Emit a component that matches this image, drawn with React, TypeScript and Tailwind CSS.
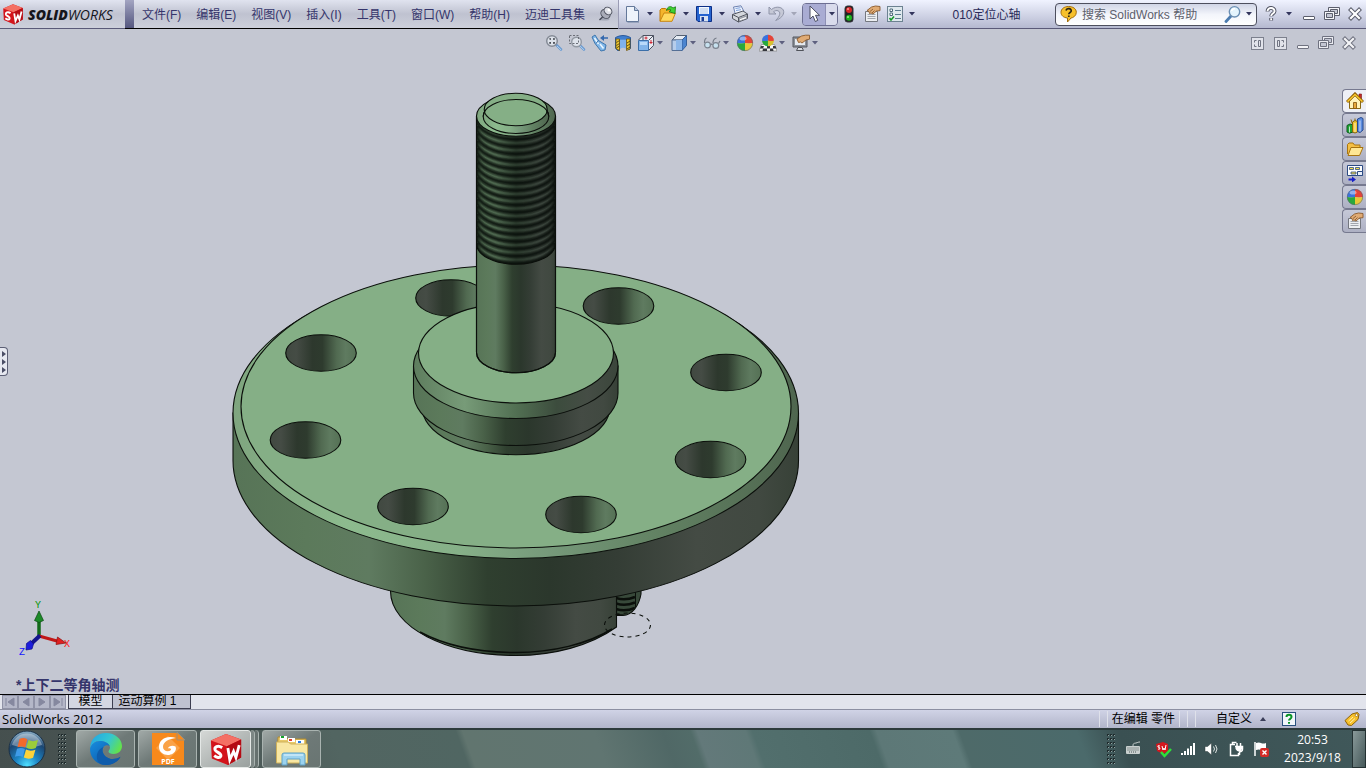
import React from "react";

type IconProps = { children: React.ReactNode; size?: number };

function Icon({ children, size = 18 }: IconProps) {
  return (
    <svg width={size} height={size} viewBox="0 0 18 18" fill="none" aria-hidden="true" className="shrink-0">
      {children}
    </svg>
  );
}

/* ---------- shared icons ---------- */

const NewDoc = () => (
  <Icon>
    <path d="M3.5 1.5h8l4 4v11h-12z" fill="#eef3fb" stroke="#64789a" />
    <path d="M11.5 1.5v4h4" fill="#b9c8df" stroke="#64789a" />
    <path d="M4.5 17.5h11.5" stroke="#7a8ba8" strokeWidth="0.6" />
  </Icon>
);

const OpenDoc = () => (
  <Icon>
    <path d="M1 16V5l1.500-1.500h4L8 5h5v3" fill="#f4b52c" stroke="#c07a08" />
    <path d="M1 16.300 5 8h11.500L13 16.300z" fill="#ffd95e" stroke="#c98510" />
    <path d="M7.500 5.500C8 1.500 12 .500 14 3l2.500-1.200-.500 6.700-6-1.800L12 5.200c-1.200-1.400-3-1.200-4.500.300z" fill="#3fd233" stroke="#14780f" strokeWidth="0.8" />
  </Icon>
);

const Save = () => (
  <Icon>
    <path d="M1.500 1.500h15v15H3l-1.500-1.500z" fill="#2563cf" stroke="#0d2f86" />
    <path d="M4 2h10v7H4z" fill="#f4f8ff" />
    <path d="M5 4h8M5 6h8M5 8h8" stroke="#9db5dc" strokeWidth="0.8" />
    <path d="M5 11h8v5.500H5z" fill="#d9e2f1" />
    <path d="M6.500 12h2.500v4H6.500z" fill="#173a93" />
  </Icon>
);

const Print = () => (
  <Icon>
    <path d="M4 8 2.500 2l7.500-1.200L13 6.500" fill="#f1f5ff" stroke="#6e83b1" />
    <path d="M4.500 3.500l5-.800M5 5.500l5-.800" stroke="#7ba0dc" />
    <path d="M1.500 9.500 12 6l4.500 3v4.500L7.500 17l-6-3.500z" fill="#d4d7dd" stroke="#50545e" />
    <path d="M1.500 9.500l6 3 9-3.500M7.500 12.500V17" stroke="#50545e" />
    <path d="M8 13l8-3v3.200L8 16.400z" fill="#9a9ea8" />
    <path d="M9 14.800l6-2.200" stroke="#ffffff" strokeWidth="1.200" />
  </Icon>
);

const UndoIcon = () => (
  <Icon>
    <path d="M2 2v7h7L6.500 6.800c3-2.500 7-1 6.200 2.500-.400 2.200-2 4-4 6.200 5-2 8.300-5.200 8-9C16.300 2 9 .500 4.500 4.500z" fill="#c5c8d6" stroke="#8f94a8" />
  </Icon>
);

const ArrowIcon = () => (
  <Icon>
    <path d="M5 1v13l3-3 2.300 5.500 2.500-1.200-2.300-5h4z" fill="#fff" stroke="#4b4e62" />
  </Icon>
);

const Traffic = () => (
  <Icon>
    <rect x="5" y="1" width="8" height="16" rx="2.500" fill="#202225" stroke="#303336" />
    <circle cx="9" cy="5" r="3" fill="#d8262a" />
    <circle cx="8" cy="4" r="1" fill="#ff9c94" />
    <circle cx="9" cy="12.800" r="3" fill="#1bb41e" />
    <circle cx="8" cy="12" r="1" fill="#9cf58e" />
  </Icon>
);

const HandSheet = () => (
  <Icon>
    <path d="M2.500 6.500h12v10h-12z" fill="#eceef2" stroke="#74777f" />
    <path d="M4.500 9.500h8M4.500 11.500h8M4.500 13.500h8" stroke="#a2a6ae" />
    <path d="M4 5.500 8.500 2l4-1 4.500.500v4.200l-3.500.300L10 9 8 8l-1.500.500L6 6.500z" fill="#e0ab74" stroke="#8a5a2c" strokeWidth="0.900" />
    <path d="M7 6.500 10 4M9 8l2.500-2.500" stroke="#74451d" strokeWidth="0.700" />
  </Icon>
);

const Options = () => (
  <Icon>
    <rect x="1.500" y="1.500" width="15" height="15" fill="#dfe9ee" stroke="#6c8291" />
    <path d="M4 4h2.500v2.500H4zM4 8h2.500v2.500H4z" stroke="#4f6a7c" fill="#fff" />
    <path d="M9 5.500h6M9 9.500h6M9 13.500h6" stroke="#5d7d91" />
    <path d="M3.500 13l1.500 2 3-3.500" stroke="#16982a" strokeWidth="1.600" />
  </Icon>
);

const Pin = () => (
  <Icon>
    <ellipse cx="7.500" cy="14" rx="5" ry="1.600" fill="#8e92a2" opacity="0.600" />
    <path d="M2.500 15 7 10.500" stroke="#444854" strokeWidth="1.300" />
    <ellipse cx="8.500" cy="9" rx="5" ry="4" fill="#a9acb8" stroke="#4b4f5b" transform="rotate(40 8.500 9)" />
    <ellipse cx="11" cy="6" rx="4.200" ry="3.400" fill="#dfe1e8" stroke="#4b4f5b" transform="rotate(40 11 6)" />
    <circle cx="12" cy="5" r="1.500" fill="#fff" />
  </Icon>
);

function Lens() {
  return (
    <>
      <path d="M11 10.500 16 15.500" stroke="#6d9bd0" strokeWidth="2.600" strokeLinecap="round" />
      <path d="M12 12 16.200 16" stroke="#bcdcf7" strokeWidth="0.800" />
    </>
  );
}

const ZoomFit = () => (
  <Icon>
    <Lens />
    <circle cx="7" cy="7" r="5.300" fill="#dde2ea" stroke="#858b96" strokeWidth="1.500" />
    <path d="M5 5.500V5h1M8 5h1.200v.800M9.200 8v1H8M6 9H5V8" stroke="#3f434b" strokeWidth="1.400" />
  </Icon>
);

const ZoomArea = () => (
  <Icon>
    <Lens />
    <circle cx="8.500" cy="8" r="4.800" fill="#dde2ea" stroke="#9298a2" strokeWidth="1.400" />
    <path d="M1.500 1.500h9v8h-9z" stroke="#6b6e77" strokeDasharray="2 1.500" />
  </Icon>
);

const PrevView = () => (
  <Icon>
    <path d="M1 3 4 1l3.500 5.500L15 11l-1 5-4 1-6-7.500z" fill="#7fb6e8" stroke="#3f77ae" />
    <path d="M3.500 4l4 6M9 10l3.500 4.500" stroke="#eaf6ff" strokeWidth="1.600" />
    <path d="M7.500 6.500 5 9.500" stroke="#2f66a0" />
    <path d="M11 4h6" stroke="#3369ae" strokeWidth="1.500" />
    <path d="M9 4l4-3v6z" fill="#3369ae" />
  </Icon>
);

const Section = () => (
  <Icon>
    <path d="M1.500 3.500Q9-.500 16.500 3.500V14l-1 1.500H13V6H5.500v10.500h-2L1.500 14z" fill="#3f7fd0" stroke="#28589b" />
    <path d="M6 5.500h6.500V15Q9 12.500 6 15z" fill="#7fb2ec" />
    <path d="M2 5h3.500v11.500L2 14.500zM12.500 5H16v10l-3.500 1.500z" fill="#f3cb32" stroke="#6d5410" strokeWidth="0.800" />
    <path d="M2.500 8.500l3-2M2.500 11.500l3-2M2.500 14l3-2M13 9l3-2M13 12l3-2M13 15l3-2" stroke="#4e3f10" strokeWidth="0.900" />
  </Icon>
);

const ViewCube = () => (
  <Icon>
    <path d="M1.500 6 6 1.500h10.500v10L12 16" fill="#e8ebf2" stroke="#4c5261" />
    <path d="M6 1.500V6M12 6l4.500-4.500" stroke="#4c5261" />
    <path d="M1.500 6.500h10v10h-10z" fill="#82b5ea" stroke="#3b6fa9" />
    <path d="M3 8h7v3H3z" fill="#b9dafa" />
    <path d="M9 2.500v3M7.500 4h3M14 6v4M12.500 8.500h3" stroke="#d12835" />
  </Icon>
);

const DisplayCube = () => (
  <Icon>
    <path d="M2 6 6.500 1.500h10L12 6z" fill="#e6ecf4" stroke="#556070" />
    <path d="M2 6h10v10.500H2z" fill="#b6cdeb" stroke="#556f95" />
    <path d="M12 6l4.500-4.500v10L12 16.500z" fill="#4c85cf" stroke="#34609d" />
    <path d="M6 6h6v10H6z" fill="#8db7e9" />
  </Icon>
);

const Glasses = () => (
  <Icon>
    <path d="M1.500 9c0-3 .500-4.500 2-5M10 9c0-3 1.500-4.500 3.500-5M7.500 11c.800-1 1.600-1 2.400-.400M15.500 9.500 17 7" stroke="#737a86" strokeWidth="1.200" />
    <circle cx="4.500" cy="11" r="2.900" fill="#c6e1ef" stroke="#7c838f" strokeWidth="1.200" />
    <circle cx="12.800" cy="11.500" r="2.900" fill="#c6e1ef" stroke="#7c838f" strokeWidth="1.200" />
  </Icon>
);

const Ball = () => (
  <Icon>
    <path d="M9 1A8 8 0 0 0 1 9q4 .800 8 0z" fill="#3b72de" />
    <path d="M9 1a8 8 0 0 1 8 8q-4 .800-8 0z" fill="#e44439" />
    <path d="M1 9a8 8 0 0 0 8 8V9q-4 .800-8 0z" fill="#2aa93c" />
    <path d="M17 9a8 8 0 0 1-8 8V9q4 .800 8 0z" fill="#e8c93a" />
    <ellipse cx="7" cy="4.500" rx="3.500" ry="2" fill="#fff" opacity="0.450" />
    <circle cx="9" cy="9" r="7.700" stroke="#5a6672" strokeWidth="0.600" />
  </Icon>
);

const Scene = () => (
  <Icon>
    <path d="M2.500 10.500h13L18 17H0z" fill="#f5f5f5" stroke="#777" strokeWidth="0.600" />
    <path d="M2 12h3l-1 2.500H1zM8 12h3v2.500H8zM14 12h2.500l1 2.500H14zM4 14.500h4V17H3.500zM11 14.500h3l.500 2.500H11z" fill="#34363c" />
    <path d="M9 .800a5.800 5.800 0 0 0-6 6q3 .600 6 0z" fill="#3b72de" />
    <path d="M9 .800a5.800 5.800 0 0 1 6 6q-3 .600-6 0z" fill="#e44439" />
    <path d="M3 6.800a6 6 0 0 0 6 5.500V6.800q-3 .600-6 0z" fill="#2aa93c" />
    <path d="M15 6.800a6 6 0 0 1-6 5.500V6.800q3 .600 6 0z" fill="#d9c12f" />
  </Icon>
);

const Monitor = () => (
  <Icon>
    <path d="M1 3h14v10H1z" fill="#8b9098" stroke="#54575e" />
    <path d="M3 5h10v6H3z" fill="#e5e9ef" />
    <path d="M6 13.500h4l1.500 3h-7z" fill="#d8dbe1" stroke="#50535a" />
    <path d="M5 5 9.500 2l4-.800H17.500v4L14 6l-4 3-1.500-1-2 .500z" fill="#e0ab74" stroke="#8a5a2c" strokeWidth="0.900" />
  </Icon>
);

const Minimize = () => (
  <Icon>
    <rect x="3.500" y="11.500" width="11" height="3" rx="0.500" fill="#fff" stroke="#5b5e6c" />
  </Icon>
);

const Restore = () => (
  <Icon>
    <path d="M5.500 2.500h11v8h-11z" fill="#f4f5f9" stroke="#5b5e6c" />
    <path d="M7.500 4.500h7v4h-7z" fill="#c4c7d4" stroke="#5b5e6c" />
    <path d="M1.500 6.500h10v8h-10z" fill="#f4f5f9" stroke="#5b5e6c" />
    <path d="M3.500 8.500h6v4h-6z" fill="#c4c7d4" stroke="#5b5e6c" />
  </Icon>
);

const Close = () => (
  <Icon>
    <path d="M3.500 3.500l11 11M14.500 3.500l-11 11" stroke="#5b5e6c" strokeWidth="4.200" />
    <path d="M4.200 4.200l9.600 9.600M13.800 4.200l-9.600 9.600" stroke="#fff" strokeWidth="2.200" />
  </Icon>
);

const Dock = ({ flip = false }: { flip?: boolean }) => (
  <Icon>
    <rect x="3.500" y="3.500" width="12" height="12" fill="#e9ebf1" stroke="#6b6f7d" />
    <path d={flip ? "M6.500 6.500h2v6h-2z" : "M10.500 6.500h2v6h-2z"} stroke="#5b5f6d" />
    <path d={flip ? "M10.500 6.500h2v2M10.500 12.500h2v-2" : "M8.500 6.500h-2v2M8.500 12.500h-2v-2"} stroke="#5b5f6d" />
  </Icon>
);

const Help = () => (
  <Icon>
    <path d="M5.500 6.500c0-5 7.500-4.500 7 0-.300 2.200-3.300 2-3.300 4.800M9.200 13v2.500" stroke="#4a4d5c" strokeWidth="3.800" />
    <path d="M5.500 6.200c0-4.500 7.500-4 7 .300-.300 2.200-3.300 2-3.300 4.600M9.200 13.300v1.900" stroke="#fff" strokeWidth="2" />
  </Icon>
);

const HelpBubble = () => (
  <Icon>
    <path d="M8.500 1.500c4.500 0 7.800 2.200 7.800 5.800S13 12.800 11 13l-3.500 4v-4C3.500 12.600 1 10.500 1 7.300s3-5.800 7.500-5.800z" fill="#f6c02c" stroke="#a46d0b" />
    <path d="M6 5.500c.500-2.800 5.800-2.300 5.200.600-.400 1.500-2.300 1.500-2.400 3.200M8.800 10.500V12" stroke="#2a2417" strokeWidth="1.700" />
  </Icon>
);

const Magnifier = () => (
  <Icon>
    <path d="M7 11 2 16.500" stroke="#4c7cb0" strokeWidth="2.800" strokeLinecap="round" />
    <circle cx="10.500" cy="6.800" r="5.200" fill="#e4f4fd" stroke="#6b8fb3" strokeWidth="1.400" />
    <path d="M7.500 6c.500-1.800 2-2.500 3.500-2.300" stroke="#fff" strokeWidth="1.500" />
  </Icon>
);

/* ---------- task pane icons ---------- */

const Home = () => (
  <Icon>
    <path d="M13 2h2.500v6H13z" fill="#c52b2b" stroke="#7b1414" strokeWidth="0.600" />
    <path d="M3.500 9v7.500h11V9L9 3.500z" fill="#fff3b8" stroke="#8a6a14" />
    <path d="M1 10 9 2l8 8" stroke="#8a5c07" strokeWidth="3" />
    <path d="M1.500 9.600 9 2.500l7.500 7.100" stroke="#f9c82d" strokeWidth="1.500" />
    <path d="M7.500 10.500h3v6h-3z" fill="#e8a93b" stroke="#7e5108" strokeWidth="0.800" />
  </Icon>
);

const Books = () => (
  <Icon>
    <path d="M1 9.500 4 8l3 1v7l-3.500 1.200L1 16z" fill="#1fa535" stroke="#0c5c1a" />
    <path d="M6.500 6 9 4.500l2.500 1V16L9 17l-2.500-1z" fill="#f0c432" stroke="#86660d" />
    <path d="M11.500 3 15 1.500l2 1V14l-3 2.500-2.500-1z" fill="#5d8de0" stroke="#25488f" />
    <path d="M3.500 10.500v6M9 7v9M14 4.500v11" stroke="#fff" opacity="0.700" />
    <path d="M5 3.500l1.500 4.500M9 2.500v2" stroke="#86660d" />
  </Icon>
);

const Folder = () => (
  <Icon>
    <path d="M1.500 14V4.500L3 3h4l1.500 2h5.500v3" fill="#f4bf45" stroke="#a87410" />
    <path d="M2 15.500 5 7.500h12L13.500 15.500z" fill="#ffe794" stroke="#a87410" />
  </Icon>
);

const Palette = () => (
  <Icon>
    <path d="M1.500 1.500h15v10h-15z" fill="#fff" stroke="#2b4a83" />
    <path d="M3.500 3.500h4v2h-4zM9.500 3.500h4v2h-4zM5 8h5v2H5z" fill="#f6dd4a" stroke="#2b4a83" strokeWidth="0.800" />
    <path d="M11.500 7.500h5v4h-5z" fill="#e8eefa" stroke="#2b4a83" />
    <path d="M2.500 15.500H8" stroke="#1a22c8" strokeWidth="2" />
    <path d="M6 12.500l4 3-4 3z" fill="#1a22c8" />
  </Icon>
);

function Cube({ size }: { size: number }) {
  return (
    <svg width={size} height={size} viewBox="0 0 36 36" aria-hidden="true" className="shrink-0">
      <path d="M2 9 18 2l16 6v19L20 35 3 28z" fill="#d3141b" />
      <path d="M2 9 18 2l16 6-15 7z" fill="#f47064" />
      <path d="M19 15 34 8v19L20 35z" fill="#b40b13" />
      <path d="M14 16.500c-5-3-8.500-.500-7.500 2.500 1 2.500 7 3.500 6 6.500-1 2.500-4.500 1.500-7-.500" fill="none" stroke="#fff" strokeWidth="3.200" />
      <path d="M20 17l2 12.500 4-9 2.500 6.500 3.500-13" fill="none" stroke="#fff" strokeWidth="3" />
    </svg>
  );
}

/* ---------- small controls ---------- */

function Caret({ faded = false }: { faded?: boolean }) {
  return (
    <svg width="6" height="4" viewBox="0 0 6 4" aria-hidden="true">
      <path d="M0 0h6L3 3.500z" fill={faded ? "#a3a6b8" : "#33355c"} />
    </svg>
  );
}

function ToolButton({ label, icon, faded }: { label: string; icon: React.ReactNode; faded?: boolean }) {
  return (
    <div className="flex">
      <button aria-label={label} className="flex w-5 items-center justify-center">{icon}</button>
      <button aria-label={`${label} ▾`} className="flex w-4 items-center justify-center">
        <Caret faded={faded} />
      </button>
    </div>
  );
}

function HudButton({ label, icon, menu }: { label: string; icon: React.ReactNode; menu?: boolean }) {
  return (
    <div className="flex">
      <button aria-label={label} className="flex w-[23px] items-center justify-center">{icon}</button>
      {menu && (
        <button aria-label={`${label} ▾`} className="flex w-[10px] items-center opacity-70">
          <Caret />
        </button>
      )}
    </div>
  );
}

function Grip() {
  return (
    <svg width="9" height="31" viewBox="0 0 9 31" aria-hidden="true">
      {[0, 4, 8, 12, 16, 20, 24, 28].map((y) =>
        [0, 3, 6].map((x) => (
          <g key={`${x}-${y}`}>
            <rect x={x} y={y} width="2" height="2" fill="#1f2b2d" />
            <rect x={x + 1} y={y + 1} width="1" height="1" fill="#8fa09f" />
          </g>
        )),
      )}
    </svg>
  );
}

/* ---------- header ---------- */

const menus = ["文件(F)", "编辑(E)", "视图(V)", "插入(I)", "工具(T)", "窗口(W)", "帮助(H)", "迈迪工具集"];

function Header() {
  return (
    <header className="flex h-[29px] shrink-0 items-stretch">
      <div className="flex w-[125px] shrink-0 items-center gap-1 border-b border-[#5a5a78] bg-linear-to-b from-[#e1e4f0] via-[#c0c3d1] to-[#cdd0db] pl-[2px]">
        <Cube size={22} />
        <span className="pt-[2px] font-['Open_Sans','Liberation_Sans',sans-serif] text-[14px] leading-4 text-[#15151c] italic">
          <b className="font-extrabold">SOLID</b>WORKS
        </span>
      </div>
      <div className="w-[9px] shrink-0 border-b border-black bg-linear-to-b from-[#a3a5c2] to-[#55577f]" />
      <nav className="flex shrink-0 items-center border-b border-black bg-linear-to-b from-[#e0e3ef] via-[#bfc2d0] to-[#cdd0db] pr-[3px] pl-2 text-[12px] text-[#35356b]">
        <div className="flex gap-[15px] pt-[2px]">
          {menus.map((m) => (
            <button key={m} className="whitespace-nowrap">{m}</button>
          ))}
        </div>
        <button aria-label="固定菜单" className="ml-3"><Pin /></button>
      </nav>
      <div className="flex min-w-0 flex-1 items-center border-b border-b-[#5a5a78] border-l border-l-[#9a9cb4] bg-linear-to-b from-[#f0f3ff] to-[#b5b9d0] pl-[3px]">
        <ToolButton label="新建" icon={<NewDoc />} />
        <ToolButton label="打开" icon={<OpenDoc />} />
        <ToolButton label="保存" icon={<Save />} />
        <ToolButton label="打印" icon={<Print />} />
        <ToolButton label="撤消" icon={<UndoIcon />} faded />
        <div className="flex h-[23px] w-9 shrink-0 overflow-hidden rounded border border-[#6d6f92]">
          <button aria-label="选择" className="flex flex-1 items-center justify-center bg-[#a9acd3]"><ArrowIcon /></button>
          <button aria-label="选择 ▾" className="flex w-3 items-center justify-center border-l border-[#8e90b5] bg-[#d9dbec]"><Caret /></button>
        </div>
        <button aria-label="重建模型" className="flex w-[22px] justify-center"><Traffic /></button>
        <button aria-label="文件属性" className="flex w-6 justify-center"><HandSheet /></button>
        <button aria-label="选项" className="flex w-[22px] justify-center"><Options /></button>
        <button aria-label="选项 ▾" className="flex w-3 justify-center"><Caret /></button>
        <h1 className="min-w-0 flex-1 truncate pt-[2px] text-center text-[12px] text-[#2a2a58]">010定位心轴</h1>
        <div className="flex h-[23px] w-[202px] shrink-0 items-center rounded border border-[#4d4f5e] bg-linear-to-b from-[#d0d5e6] via-[#f3f5fb] to-white px-1">
          <HelpBubble />
          <input aria-label="搜索帮助" placeholder="搜索 SolidWorks 帮助" className="ml-1 min-w-0 flex-1 bg-transparent pt-[2px] text-[12px] outline-none placeholder:text-[#5d606c]" />
          <button aria-label="搜索"><Magnifier /></button>
          <button aria-label="搜索 ▾" className="ml-1"><Caret /></button>
        </div>
        <button aria-label="帮助" className="ml-[2px] flex w-6 justify-center"><Help /></button>
        <button aria-label="帮助 ▾" className="flex w-3 justify-center"><Caret /></button>
        <div className="ml-[2px] flex">
          <button aria-label="最小化" className="flex w-[23px] justify-center"><Minimize /></button>
          <button aria-label="还原" className="flex w-[23px] justify-center"><Restore /></button>
          <button aria-label="关闭" className="flex w-[23px] justify-center"><Close /></button>
        </div>
      </div>
    </header>
  );
}

/* ---------- 3D model ---------- */

const holes = [
  [451, 298], [618.5, 306], [726, 372.5], [710.5, 459.5], [581, 514.5], [413, 506.5], [305.5, 440], [321, 353],
];

const threadRows = Array.from({ length: 18 }, (_, i) => 119 + i * 7.3);

function Model() {
  return (
    <svg className="absolute inset-0 h-full w-full" role="img" aria-label="010定位心轴">
      <defs>
        <linearGradient id="wall">
          <stop offset="0" stopColor="#577457" />
          <stop offset="0.130" stopColor="#5c7a5b" />
          <stop offset="0.240" stopColor="#5f7b60" />
          <stop offset="0.340" stopColor="#4a6249" />
          <stop offset="0.450" stopColor="#2f3f2f" />
          <stop offset="0.560" stopColor="#2b372c" />
          <stop offset="0.680" stopColor="#343d35" />
          <stop offset="0.820" stopColor="#444b44" />
          <stop offset="0.930" stopColor="#414941" />
          <stop offset="1" stopColor="#374137" />
        </linearGradient>
        <linearGradient id="bore">
          <stop offset="0" stopColor="#414941" />
          <stop offset="0.150" stopColor="#454c45" />
          <stop offset="0.380" stopColor="#2d382d" />
          <stop offset="0.520" stopColor="#2e3b2e" />
          <stop offset="0.720" stopColor="#516a51" />
          <stop offset="0.850" stopColor="#5f7b60" />
          <stop offset="1" stopColor="#557155" />
        </linearGradient>
        <linearGradient id="rim">
          <stop offset="0" stopColor="#7fa57f" />
          <stop offset="0.200" stopColor="#8dbb8e" />
          <stop offset="0.400" stopColor="#86b088" />
          <stop offset="0.560" stopColor="#76997a" />
          <stop offset="0.750" stopColor="#628263" />
          <stop offset="1" stopColor="#4f664f" />
        </linearGradient>
        <linearGradient id="collar">
          <stop offset="0" stopColor="#5e7d5e" />
          <stop offset="0.250" stopColor="#779b78" />
          <stop offset="0.500" stopColor="#527053" />
          <stop offset="0.700" stopColor="#3c4c3d" />
          <stop offset="0.850" stopColor="#454d45" />
          <stop offset="1" stopColor="#3b463b" />
        </linearGradient>
        <linearGradient id="groove">
          <stop offset="0" stopColor="#4f6b50" />
          <stop offset="0.250" stopColor="#4c654d" />
          <stop offset="0.500" stopColor="#29382b" />
          <stop offset="0.800" stopColor="#39433b" />
          <stop offset="1" stopColor="#353f37" />
        </linearGradient>
        <clipPath id="threadClip">
          <path d="M476.500 116a39.500 20.300 0 0 0 79 0V244a39.500 20.300 0 0 1-79 0z" />
        </clipPath>
        <clipPath id="screwClip">
          <path d="M616.500 590H641C641 606 632 615 616.500 616z" />
        </clipPath>
      </defs>

      <g transform="translate(0 -29)" stroke="#0b0f0b" strokeWidth="1.100">
        {/* lower boss */}
        <path d="M616.500 580H641V594C639 606 632 615 623 615.500H616.500z" fill="#38493a" />
        <g clipPath="url(#screwClip)" strokeWidth="2.500">
          {[598, 603.5, 609, 614.5].map((y) => (
            <path key={y} d={`M616 ${y}q9 3 19-1`} fill="none" />
          ))}
          <path d="M635.500 590v21" strokeWidth="1" />
        </g>
        <path d="M390.500 591C390.500 627 446 655.500 516 655.500C553 655.500 590 646 616.500 627V570H390.500z" fill="url(#wall)" />
        <path d="M420 632C446 646 479 652.500 516 652.500C552 652.500 588 644 612 629" fill="none" strokeWidth="1.500" />
        <ellipse cx="627.500" cy="625" rx="23" ry="12" fill="none" strokeDasharray="4 4" />

        {/* flange */}
        <path d="M233 413V460.500A282.750 145.500 0 0 0 798.500 460.500V413z" fill="url(#wall)" />
        <ellipse cx="515.750" cy="413" rx="282.750" ry="145.500" fill="url(#rim)" />
        <ellipse cx="516" cy="406.500" rx="275" ry="141.500" fill="#85af86" />
        {holes.map(([x, y]) => (
          <ellipse key={x} cx={x} cy={y} rx="35.300" ry="18.200" fill="url(#bore)" />
        ))}

        {/* hub */}
        <ellipse cx="516" cy="407" rx="94" ry="47.700" fill="url(#wall)" />
        <path d="M413.500 366V393A102.250 52.500 0 0 0 618 393V366z" fill="url(#wall)" />
        <ellipse cx="515.750" cy="366" rx="102.250" ry="52.500" fill="url(#collar)" />
        <ellipse cx="516" cy="353" rx="97.500" ry="50" fill="#85af86" />

        {/* spindle */}
        <path d="M476.500 116V352.500A39.500 20.300 0 0 0 555.500 352.500V116z" fill="url(#wall)" />
        <g clipPath="url(#threadClip)" fill="none">
          <rect x="476" y="110" width="80" height="160" fill="url(#groove)" stroke="none" />
          {threadRows.map((y) => (
            <g key={y} stroke="#060b07">
              <path d={`M476.500 ${y}a39.500 20.300 0 0 0 79 0`} strokeWidth="5.200" opacity="0.300" />
              <path d={`M476.500 ${y}a39.500 20.300 0 0 0 79 0`} strokeWidth="3.400" opacity="0.400" />
              <path d={`M476.500 ${y}a39.500 20.300 0 0 0 79 0`} strokeWidth="1.500" opacity="0.500" />
            </g>
          ))}
        </g>
        <path d="M476.500 116V352.500A39.500 20.300 0 0 0 555.500 352.500V116" fill="none" />
        <path d="M476.500 244a39.500 20.300 0 0 0 79 0" fill="none" />
        <ellipse cx="516" cy="116" rx="39.500" ry="20.300" fill="url(#rim)" />
        <ellipse cx="516" cy="116.500" rx="32.800" ry="17" fill="url(#rim)" />
        <ellipse cx="515.700" cy="109.500" rx="31.500" ry="16.200" fill="#85af86" />
        <path d="M483.200 116.500a32.800 17 0 0 1 65.600 0" fill="none" />
      </g>
    </svg>
  );
}

function Triad() {
  return (
    <svg width="60" height="60" viewBox="14 598 60 60" className="absolute bottom-9 left-[14px]" role="img" aria-label="坐标轴">
      <path d="M39 636V620" stroke="#126a1a" strokeWidth="3.500" />
      <path d="M34.500 620.500 39 611l4.500 9.500-4.500 2z" fill="#1c8a28" stroke="#0c4912" strokeWidth="0.700" />
      <path d="M39 636 57 641" stroke="#c11717" strokeWidth="3.200" />
      <path d="M57.500 637 66 643l-10 1.500z" fill="#e02020" stroke="#8a0e0e" strokeWidth="0.700" />
      <path d="M40 635.500 32 643" stroke="#14148e" strokeWidth="4" />
      <path d="M26.500 643.500l4-3 3 3.500-1.500 5-6 1z" fill="#1d1ddb" stroke="#0d0d86" strokeWidth="0.700" />
      <g fontFamily="Liberation Mono, monospace" fontSize="10">
        <text x="35" y="608" fill="#079307">Y</text>
        <text x="64" y="647" fill="#ff1313">X</text>
        <text x="19" y="655" fill="#1414ff">Z</text>
      </g>
    </svg>
  );
}

const paneTabs = [
  ["SolidWorks 资源", <Home />],
  ["设计库", <Books />],
  ["文件探索器", <Folder />],
  ["视图调色板", <Palette />],
  ["外观", <Ball />],
  ["自定义属性", <HandSheet />],
] as [string, React.ReactNode][];

function Viewport() {
  return (
    <main className="relative flex min-h-0 flex-1 flex-col overflow-hidden bg-[#c4c7d2]">
      <Model />
      <div className="relative grid grid-cols-[1fr_auto_1fr] items-center pt-[5px]">
        <span />
        <div className="flex pr-[2px]">
          <HudButton label="整屏显示全图" icon={<ZoomFit />} />
          <HudButton label="局部放大" icon={<ZoomArea />} />
          <HudButton label="上一视图" icon={<PrevView />} />
          <HudButton label="剖面视图" icon={<Section />} />
          <HudButton label="视图定向" icon={<ViewCube />} menu />
          <HudButton label="显示样式" icon={<DisplayCube />} menu />
          <HudButton label="隐藏/显示项目" icon={<Glasses />} menu />
          <HudButton label="编辑外观" icon={<Ball />} />
          <HudButton label="应用布景" icon={<Scene />} menu />
          <HudButton label="视图设定" icon={<Monitor />} menu />
        </div>
        <div className="flex justify-end pr-[6px] opacity-80">
          <HudButton label="左侧面板" icon={<Dock />} />
          <HudButton label="右侧面板" icon={<Dock flip />} />
          <HudButton label="最小化文档" icon={<Minimize />} />
          <HudButton label="还原文档" icon={<Restore />} />
          <HudButton label="关闭文档" icon={<Close />} />
        </div>
      </div>
      <aside className="absolute top-[60px] right-0 flex flex-col">
        {paneTabs.map(([label, icon], i) => (
          <button
            key={label}
            aria-label={label}
            className={
              i === 0
                ? "flex h-6 w-6 items-center justify-center rounded-l-sm border border-r-0 border-[#76798f] bg-[#eef0f6]"
                : "flex h-6 w-6 items-center justify-center rounded-l-sm border border-r-0 border-[#76798f] bg-linear-to-b from-[#c6c9d8] to-[#adb0c3]"
            }
          >
            {icon}
          </button>
        ))}
      </aside>
      <button aria-label="展开设计树" className="absolute top-[318px] left-0 flex h-[29px] w-2 items-center justify-center rounded-r-sm border border-l-0 border-[#5c5f75] bg-[#e6e8f0]">
        <svg width="4" height="22" viewBox="0 0 4 22" aria-hidden="true">
          <path d="M0 0l4 3-4 3zM0 8l4 3-4 3zM0 16l4 3-4 3z" fill="#4b4e66" />
        </svg>
      </button>
      <Triad />
      <p className="absolute bottom-[1px] left-4 text-[14px] leading-4 font-bold text-[#35356b]">*上下二等角轴测</p>
    </main>
  );
}

/* ---------- bottom bars ---------- */

const navPaths = [
  "M3 3v8M11 3 5 7l6 4z",
  "M10 3 4 7l6 4z",
  "M4 3l6 4-6 4z",
  "M3 3l6 4-6 4zM11 3v8",
];

function SheetTabs() {
  return (
    <div className="flex h-4 shrink-0 items-stretch border-t border-b border-t-black border-b-[#8d90a2] bg-[#e2e4ec] pl-[2px] text-[12px] leading-[13px] text-black">
      {navPaths.map((d) => (
        <button key={d} aria-label="标签导航" className="flex w-4 items-center justify-center border border-[#8f92a6] bg-[#b4b7c8]">
          <svg width="14" height="12" viewBox="0 1 14 12" aria-hidden="true">
            <path d={d} fill="#85889f" stroke="#85889f" />
          </svg>
        </button>
      ))}
      <button className="ml-[2px] w-[45px] border-r border-b border-l border-[#3c3e50] bg-[#d3d6e2]">模型</button>
      <button className="w-[78px] border-r border-b border-[#3c3e50] bg-[#bfc2d0] pr-2">运动算例 1</button>
    </div>
  );
}

function StatusBar() {
  return (
    <div className="flex h-[18px] shrink-0 items-center bg-linear-to-b from-[#d0d3e6] to-[#b2b5ca] text-[12px] leading-4 text-black">
      <span className="flex-1 pl-[2px] font-['Open_Sans','Noto_Sans_CJK_SC',sans-serif] text-[13px]">SolidWorks 2012</span>
      <span className="h-4 w-[9px] border-x border-[#dfe1ea]" />
      <span className="px-1">在编辑 零件</span>
      <span className="h-4 w-[9px] border-x border-[#dfe1ea]" />
      <span className="h-4 w-2 border-r border-[#dfe1ea]" />
      <button className="ml-5 flex items-center gap-2">
        自定义
        <svg width="6" height="4" viewBox="0 0 6 4" aria-hidden="true"><path d="M0 4h6L3 0z" fill="#3a3d58" /></svg>
      </button>
      <button aria-label="快速提示" className="ml-4">
        <svg width="14" height="14" viewBox="0 0 14 14" aria-hidden="true">
          <rect x="0.500" y="0.500" width="13" height="13" fill="#f2f6fb" stroke="#28507e" />
          <path d="M4.500 5c0-3 5-3 5 0 0 1.800-2.500 1.800-2.500 3.500M7 10v1.700" fill="none" stroke="#0a9427" strokeWidth="2" />
        </svg>
      </button>
      <button aria-label="标签" className="mr-[6px] ml-[48px]">
        <svg width="16" height="16" viewBox="0 0 16 16" aria-hidden="true">
          <path d="M1 9.500 8 3l5.500-1.500L15 3.500l-1 5L7.500 14.500 4 14z" fill="#f7c02a" stroke="#8f6208" />
          <circle cx="12.500" cy="4.200" r="1.300" fill="#fff" stroke="#8f6208" strokeWidth="0.700" />
          <path d="M4.500 10 9 6M6 12l5-4.500" stroke="#fff0b0" />
        </svg>
      </button>
    </div>
  );
}

function TaskButton({ label, active, children }: { label: string; active?: boolean; children: React.ReactNode }) {
  return (
    <button
      aria-label={label}
      className={
        active
          ? "flex h-[38px] w-[51px] items-center justify-center rounded-[3px] border border-[#e4e8e6] bg-linear-to-br from-[#d5d8d6] via-[#b5bab8] to-[#9aa19f]"
          : "flex h-[38px] w-[59px] items-center justify-center rounded-[3px] border border-[#a9b3b0] bg-linear-to-br from-[#a1a9a7] via-[#6e7977] to-[#697572]"
      }
    >
      {children}
    </button>
  );
}

function StartOrb() {
  return (
    <svg width="38" height="38" viewBox="0 0 38 38" aria-hidden="true">
      <defs>
        <radialGradient id="orb" cx="0.500" cy="0.950" r="0.900">
          <stop offset="0" stopColor="#4fe0ff" />
          <stop offset="0.350" stopColor="#1d86c6" />
          <stop offset="0.750" stopColor="#1c4672" />
          <stop offset="1" stopColor="#7fa3bd" />
        </radialGradient>
      </defs>
      <circle cx="19" cy="19" r="18" fill="url(#orb)" stroke="#1b3045" />
      <path d="M4 15a15.500 15.500 0 0 1 30 0q-15 5-30 0z" fill="#fff" opacity="0.350" />
      <path d="M11.500 9c3-1.500 5.500-1 7.800.300L17.200 17.500c-2.300-1.300-5-1.400-7.700-.300z" fill="#f26a2c" />
      <path d="M20.500 10c3 1.500 6 1.500 9.500 0l-2.200 8c-3 1.500-6.200 1.500-9.500-.200z" fill="#9ccc3a" />
      <path d="M9 18.800c2.700-1.400 5.600-1.100 7.900.200l-2.200 8c-2.300-1.300-5.100-1.400-7.700-.200z" fill="#3f9be8" />
      <path d="M18 19.600c3 1.500 6 1.500 9.400.100l-2.300 8c-3 1.400-6.200 1.400-9.300-.100z" fill="#fcd23a" />
    </svg>
  );
}

function EdgeLogo() {
  return (
    <svg width="34" height="34" viewBox="0 0 34 34" aria-hidden="true">
      <defs>
        <linearGradient id="edgeTop" x1="0" x2="1" y1="0.200" y2="0.600">
          <stop offset="0" stopColor="#22a7e4" />
          <stop offset="0.550" stopColor="#35c6d0" />
          <stop offset="1" stopColor="#63e24b" />
        </linearGradient>
        <linearGradient id="edgeLow" x1="0" x2="1" y1="0" y2="1">
          <stop offset="0" stopColor="#168ee0" />
          <stop offset="1" stopColor="#0b4a9b" />
        </linearGradient>
      </defs>
      <path d="M1 17C1 7 8 1 17 1s16 6 16 13c0 5-4 8-8.500 8-3 0-5-1-5-2.500 0-1.200 1.500-1.800 1.500-4C21 12 16 9 11 9 6 9 2 12.500 1 17z" fill="url(#edgeTop)" />
      <path d="M1 17c1-5 5-8 10-8 4.500 0 8.500 2 9.800 5-2-1.500-4.800-1-6.300 1-3 4 1 12 9.500 12 3 0 5-1 7.500-2.300C29 30 23 33 17 33 8 33 1 26 1 17z" fill="url(#edgeLow)" />
      <path d="M11.500 32C6 28.500 6.500 18 14.500 15c-3 4 1 12 9.500 12 3 0 5-1 7.500-2.300C28 31 19 35 11.500 32z" fill="#0f5cab" />
    </svg>
  );
}

function PdfLogo() {
  return (
    <svg width="34" height="34" viewBox="0 0 34 34" aria-hidden="true">
      <path d="M1 1h25l7 7v25H1z" fill="#f7891c" />
      <path d="M26 0v8h8z" fill="#f7891c" stroke="#8b9391" strokeWidth="0.800" />
      <path d="M17 4l12 12-12 12L5 16z" fill="#faa247" />
      <path d="M25 6c-9-3-17 1-17 9 0 7 8.500 10 14 6.500 3-2 3.500-5 2.500-7-3-1.500-7-.500-7.500 2 1.500-.500 3.500 0 3 1.500-3 2.500-8 1-8-3C12 9.500 18 7 25 6z" fill="#fff" />
      <text x="17" y="32" textAnchor="middle" fontFamily="Open Sans, sans-serif" fontWeight="700" fontSize="7" fill="#fff">PDF</text>
    </svg>
  );
}

function ExplorerLogo() {
  return (
    <svg width="36" height="34" viewBox="0 0 36 34" aria-hidden="true">
      <path d="M4 5h8l2 2h18v22H3z" fill="#e9c968" stroke="#b28d32" />
      <path d="M6 4h7v4H6z" fill="#fff" /><path d="M7 4h3v2H7z" fill="#16a32c" />
      <path d="M14 6h7v4h-7z" fill="#fff" /><path d="M15 7h3v2h-3z" fill="#e0432e" />
      <path d="M22 8h8v4h-8z" fill="#fff" /><path d="M24 9h3v2h-3z" fill="#2c7be0" />
      <path d="M2.500 10h12l2 2h17v19h-31z" fill="#f8e7a3" stroke="#cdb05b" />
      <path d="M8 33V23q0-2 2-2h19q2 0 2 2v10h-5v-6H13v6z" fill="#9bd2ee" stroke="#5fa1c6" />
      <path d="M10 23h19" stroke="#e7f7ff" fill="none" />
    </svg>
  );
}

function Tray() {
  return (
    <div className="flex items-center">
      <button aria-label="键盘" className="flex w-[34px] items-center justify-center pb-1">
        <svg width="16" height="15" viewBox="0 0 16 15" aria-hidden="true">
          <rect x="1" y="6" width="14" height="8" rx="1" fill="#c9d0cf" />
          <path d="M2.500 8h11M2.500 10h11M4 12h8" stroke="#4a5756" strokeDasharray="1 1" />
          <path d="M8 6c0-3 1-2.500 3-3s2-1 4-1" stroke="#c9d0cf" fill="none" />
        </svg>
      </button>
      <button aria-label="SolidWorks" className="flex w-[26px] items-center justify-center">
        <svg width="17" height="17" viewBox="0 0 17 17" aria-hidden="true">
          <path d="M1 3l7-2 5 2v7l-5 3-6-3z" fill="#d3161d" />
          <path d="M5 5q-3-1-2 1l2 1q0 2-2 1M7 5l1 4 1-2 1 2 1-5" stroke="#fff" fill="none" />
          <path d="M6 11l3.500 4L16 8" stroke="#2fe03a" strokeWidth="2.500" fill="none" />
        </svg>
      </button>
      <button aria-label="网络" className="flex w-6 items-center justify-center">
        <svg width="16" height="14" viewBox="0 0 16 14" aria-hidden="true">
          <path d="M1 11h2v2H1zM4 9h2v4H4zM7 6.500h2V13H7zM10 4h2v9h-2zM13 1h2v12h-2z" fill="#fff" />
        </svg>
      </button>
      <button aria-label="音量" className="flex w-[23px] items-center justify-center">
        <svg width="16" height="14" viewBox="0 0 16 14" aria-hidden="true">
          <path d="M1 4.500h2.500L7.500 1v12L3.500 9.500H1z" fill="#fff" stroke="#2d3a3a" strokeWidth="0.500" />
          <path d="M9.500 4.500q2 2.500 0 5M11.500 3q3 4 0 8" stroke="#dde3e2" fill="none" />
        </svg>
      </button>
      <button aria-label="电源" className="flex w-[25px] items-center justify-center">
        <svg width="16" height="16" viewBox="0 0 16 16" aria-hidden="true">
          <path d="M7 3.500H2.500v11h8V12M4.500 3V1.500h4" stroke="#fff" strokeWidth="1.500" fill="none" />
          <path d="M7 5.500h7.500V8q0 2.500-3 3v3M9 2v3.500M12.500 2v3.500" stroke="#fff" strokeWidth="1.500" fill="none" />
          <path d="M7.500 6h6.500v2q-1 2.500-3 2.500T7.500 8z" fill="#fff" />
        </svg>
      </button>
      <button aria-label="操作中心" className="flex w-[25px] items-center justify-center">
        <svg width="16" height="16" viewBox="0 0 16 16" aria-hidden="true">
          <path d="M2 1v14" stroke="#fff" strokeWidth="1.500" />
          <path d="M3 2q3-1 5 0t5 0v7q-3 1-5 0T3 9z" fill="#fff" />
          <rect x="7" y="7" width="9" height="9" rx="2" fill="#d32a26" />
          <path d="M9.500 9.500l4 4M13.500 9.500l-4 4" stroke="#fff" strokeWidth="1.400" />
        </svg>
      </button>
    </div>
  );
}

function Taskbar() {
  return (
    <footer className="flex h-10 shrink-0 items-center border-t-2 border-t-[#2d3a3b] bg-[linear-gradient(70deg,#454f4e_0%,#4c5957_18%,#526561_25%,#506662_34%,#61756f_34.5%,#607571_44%,#506866_49%,#526c69_51%,#63797a_51.5%,#5f7877_55%,#526f6d_55.5%,#4d6a68_64%,#5d7877_64.5%,#5e7a79_70%,#4e6a69_70.5%,#4b6a6b_79%,#3a5052_82%,#40585a_100%)]">
      <button aria-label="开始" className="ml-2 shrink-0"><StartOrb /></button>
      <div className="ml-3"><Grip /></div>
      <div className="ml-[9px] flex items-center gap-[3px]">
        <TaskButton label="Microsoft Edge"><EdgeLogo /></TaskButton>
        <TaskButton label="PDF"><PdfLogo /></TaskButton>
        <div className="flex">
          <TaskButton label="SolidWorks" active><Cube size={34} /></TaskButton>
          <span className="h-[38px] w-1 rounded-r-sm border-r border-[#a9b3b0] bg-[#7c8684]" />
          <span className="h-[38px] w-1 rounded-r-sm border-r border-[#a9b3b0] bg-[#66716f]" />
        </div>
        <TaskButton label="资源管理器"><ExplorerLogo /></TaskButton>
      </div>
      <div className="ml-auto"><Grip /></div>
      <Tray />
      <time className="mx-2 w-[63px] text-center font-['Open_Sans','Liberation_Sans',sans-serif] text-[12px] leading-[18px] whitespace-nowrap text-white">
        20:53
        <br />
        2023/9/18
      </time>
      <button aria-label="显示桌面" className="h-[38px] w-[14px] border border-[#243233] bg-linear-to-br from-[#8a9a9a] to-[#46595a]" />
    </footer>
  );
}

export default function App() {
  return (
    <div className="flex h-screen min-h-[480px] flex-col overflow-hidden bg-[#c4c7d2] font-['Liberation_Sans','Noto_Sans_CJK_SC',sans-serif]">
      <Header />
      <Viewport />
      <SheetTabs />
      <StatusBar />
      <Taskbar />
    </div>
  );
}
